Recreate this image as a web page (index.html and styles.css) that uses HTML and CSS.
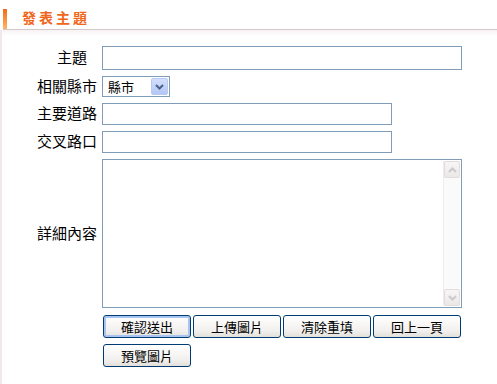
FILE: index.html
```html
<!DOCTYPE html>
<html lang="zh-TW">
<head>
    <meta charset="UTF-8">
    <meta name="viewport" content="width=device-width, initial-scale=1.0">
    <title>發表主題</title>
    <link rel="stylesheet" href="styles.css">
</head>
<body>
    <div class="header">
        <span class="header-bar"></span>
        <h1>發表主題</h1>
    </div>

    <div class="page">
        <form class="post-form" onsubmit="return false;">
            <label class="label label-pad" for="subject">主題</label>
            <input type="text" id="subject" class="field field-wide">

            <label class="label">相關縣市</label>
            <div class="select">
                <span class="select-text">縣市</span>
                <span class="select-arrow">
                    <svg width="9" height="6" viewBox="0 0 9 6"><path d="M1 1 L4.5 4.5 L8 1" fill="none" stroke="#4d6185" stroke-width="2"/></svg>
                </span>
            </div>

            <label class="label" for="road">主要道路</label>
            <input type="text" id="road" class="field field-mid">

            <label class="label" for="cross">交叉路口</label>
            <input type="text" id="cross" class="field field-mid">

            <label class="label label-middle" for="content">詳細內容</label>
            <div class="memo">
                <textarea id="content"></textarea>
                <div class="scroll">
                    <span class="scroll-btn">
                        <svg width="9" height="6" viewBox="0 0 9 6"><path d="M1 5 L4.5 1.5 L8 5" fill="none" stroke="#cdc8ce" stroke-width="2"/></svg>
                    </span>
                    <span class="scroll-btn">
                        <svg width="9" height="6" viewBox="0 0 9 6"><path d="M1 1 L4.5 4.5 L8 1" fill="none" stroke="#cdc8ce" stroke-width="2"/></svg>
                    </span>
                </div>
            </div>

            <span></span>
            <div class="buttons">
                <button class="btn btn-default">確認送出</button>
                <button class="btn">上傳圖片</button>
                <button class="btn">清除重填</button>
                <button class="btn">回上一頁</button>
                <button class="btn">預覽圖片</button>
            </div>
        </form>
    </div>
</body>
</html>
```

FILE: styles.css
```css
body {
    margin: 0;
    font-family: "Liberation Sans", "Noto Sans CJK TC", sans-serif;
    background-color: white;
    color: #000;
}
.header {
    display: flex;
    align-items: flex-end;
    height: 29px;
    border-bottom: 1px solid #d2c8c9;
    margin-left: 3px;
}
.header-bar {
    width: 4px;
    height: 20px;
    background: linear-gradient(#f26a1b, #ffb566);
}
.header h1 {
    margin: 0 0 2px 15px;
    font-size: 14px;
    font-weight: bold;
    letter-spacing: 3px;
    line-height: 18px;
    color: #f0661a;
}
.page {
    border-left: 2px solid #f3e7eb;
    background: linear-gradient(#f7f2f4, #ffffff 6px);
    padding-top: 16px;
    min-height: 338px;
}
.post-form {
    display: grid;
    grid-template-columns: 95px auto;
    column-gap: 5px;
    row-gap: 6px;
    align-items: center;
}
.label {
    text-align: right;
    font-size: 15px;
    line-height: 18px;
}
.label-pad {
    padding-right: 10px;
}
.field {
    box-sizing: border-box;
    height: 22px;
    border: 1px solid #7f9db9;
    margin: 0;
    padding: 2px;
    font-size: 13px;
}
.field-wide {
    width: 360px;
    height: 24px;
}
.field-mid {
    width: 290px;
}
.select {
    box-sizing: border-box;
    display: flex;
    align-items: center;
    justify-content: space-between;
    width: 68px;
    height: 21px;
    border: 1px solid #7f9db9;
    padding: 1px;
}
.select-text {
    font-size: 13px;
    padding-left: 4px;
}
.select-arrow {
    box-sizing: border-box;
    display: flex;
    align-items: center;
    justify-content: center;
    width: 17px;
    height: 17px;
    border: 1px solid #b7c9f4;
    border-radius: 2px;
    background: linear-gradient(#d2dffd, #b3c7f5);
}
.memo {
    box-sizing: border-box;
    display: flex;
    width: 360px;
    height: 149px;
    border: 1px solid #7f9db9;
    padding: 1px;
}
.memo textarea {
    flex: 1;
    border: none;
    resize: none;
    outline: none;
    margin: 0;
    padding: 2px;
}
.scroll {
    box-sizing: border-box;
    width: 17px;
    display: flex;
    flex-direction: column;
    justify-content: space-between;
    background-color: #fbfafa;
    border-left: 1px solid #efecec;
}
.scroll-btn {
    box-sizing: border-box;
    display: flex;
    align-items: center;
    justify-content: center;
    height: 17px;
    border: 1px solid #e2dcdc;
    border-radius: 2px;
    background: linear-gradient(#f7f5f5, #ebe8e8);
}
.buttons {
    display: flex;
    flex-wrap: wrap;
    gap: 6px 2px;
    width: 359px;
    margin: 1px 0 0 1px;
}
.btn {
    box-sizing: border-box;
    width: 88px;
    height: 23px;
    padding: 0;
    border: 1px solid #003c74;
    border-radius: 3px;
    background: linear-gradient(#ffffff, #f2f0ee 70%, #e3e0db);
    font-family: "Liberation Sans", "Noto Sans CJK TC", sans-serif;
    font-size: 13px;
    color: #000;
    cursor: pointer;
}
.btn-default {
    box-shadow: inset 0 0 0 2px #a9c4f0;
}
```
